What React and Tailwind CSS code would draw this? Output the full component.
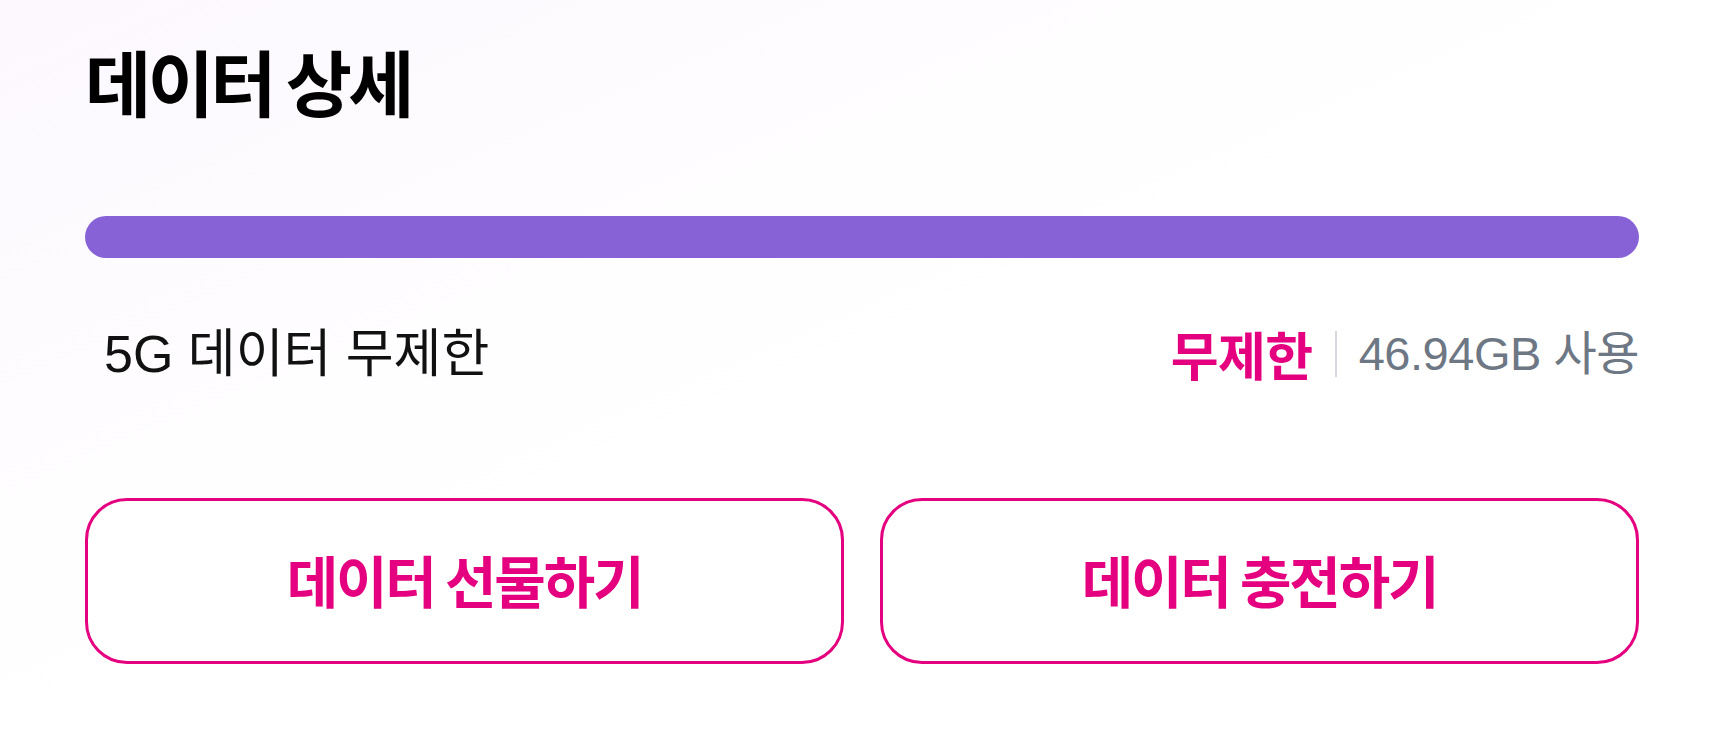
export default function App() {
  const font = { fontFamily: '"Noto Sans CJK KR", "Noto Sans", sans-serif' };
  const mixed = { fontFamily: '"Liberation Sans", "Noto Sans CJK KR", sans-serif' };
  return (
    <div
      className="w-full h-[750px] bg-gradient-to-br from-[#fcf8fe] via-white to-white pl-[85px] pr-[84px] pt-[32px]"
      style={font}
    >
      <h1 className="text-[72px] leading-[96px] font-bold text-black tracking-[-0.05em]">데이터 상세</h1>
      <div className="mt-[88px] h-[42px] rounded-full bg-[#8761d6]" />
      <div className="mt-[66px] flex items-center justify-between h-[60px]">
        <span className="pl-[19px] text-[52px] leading-[60px] text-[#111111]" style={mixed}>5G 데이터 무제한</span>
        <div className="flex items-center">
          <span className="text-[52px] leading-[60px] font-bold text-[#e4007f] tracking-[-0.01em]">무제한</span>
          <span className="mx-[22px] w-[2px] h-[46px] bg-[#d5d8dd]" />
          <span className="text-[47px] leading-[60px] text-[#6e7784] tracking-[-0.01em]" style={mixed}>46.94GB 사용</span>
        </div>
      </div>
      <div className="mt-[114px] grid grid-cols-2 gap-[36px]">
        <button className="h-[166px] rounded-[42px] border-[3px] border-[#e4007f] bg-white text-[56px] font-bold text-[#e4007f] tracking-[-0.04em] pb-[4px]">
          데이터 선물하기
        </button>
        <button className="h-[166px] rounded-[42px] border-[3px] border-[#e4007f] bg-white text-[56px] font-bold text-[#e4007f] tracking-[-0.04em] pb-[4px]">
          데이터 충전하기
        </button>
      </div>
    </div>
  );
}
